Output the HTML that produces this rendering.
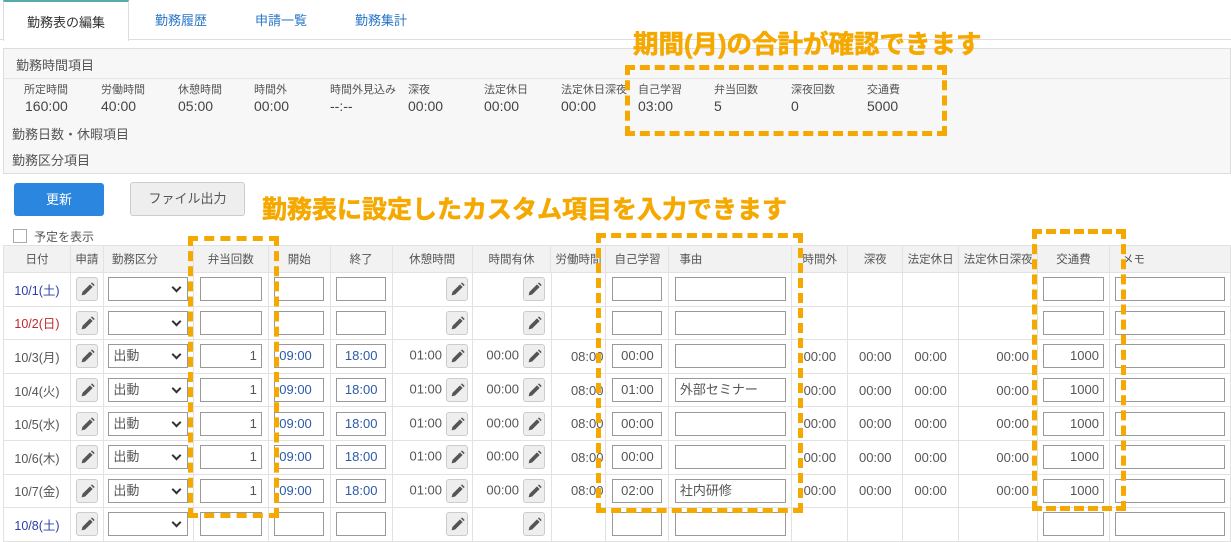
<!DOCTYPE html>
<html><head><meta charset="utf-8"><style>
*{box-sizing:border-box;margin:0;padding:0}
body{width:1231px;height:532px;overflow:hidden;background:#fff;font-family:"Liberation Sans","Noto Sans CJK JP",sans-serif;color:#444;position:relative;font-size:12px}
.abs{position:absolute}
.tab{position:absolute;top:0;height:40px;line-height:42px;font-size:13px;color:#2a78c8;text-align:center}
.panel{position:absolute;left:3px;top:48px;width:1228px;height:126px;background:#f7f7f7;border:1px solid #ddd}
.lbl{position:absolute;font-size:11px;color:#555}
.val{position:absolute;font-size:14px;color:#444}
.sec{position:absolute;font-size:13px;color:#555;left:12px}
table{position:absolute;left:3px;top:245px;border-collapse:collapse;table-layout:fixed}
td,th{border:1px solid #e2e2e2;font-weight:normal;font-size:12px;color:#555;height:33.6px;padding:0;white-space:nowrap;overflow:hidden}
th{background:#f2f2f2;height:27px;text-align:center;font-size:11.5px}
td{font-size:13px}
.d{text-align:center;font-size:12.5px}
.b{color:#2b3fa8}.r{color:#c0282c}
.in{display:block;margin:0 auto;height:24px;border:1px solid #999;background:#fff;font-size:13px;line-height:22px;padding:0 4px}
.pen{display:inline-block;width:22px;height:24px;border:1px solid #ccc;background:#eee;border-radius:3px;vertical-align:middle;position:relative}
.pen svg{position:absolute;left:3px;top:4px}
.sel{display:block;margin:0 auto;width:80px;height:24px;border:1px solid #999;background:#fff;position:relative;font-size:13px;line-height:22px;padding-left:4px}
.sel:after{content:"";position:absolute;right:7px;top:6px;width:5px;height:5px;border-right:2px solid #333;border-bottom:2px solid #333;transform:rotate(45deg)}
.tm{color:#2b5aa8}
.dash{position:absolute;border:5px dashed #f5a800}
.note{position:absolute;font-weight:bold;color:#f5a800;-webkit-text-stroke:0.6px #f5a800}
</style></head><body>
<div class="abs" style="left:0;top:39px;width:1231px;height:1px;background:#ddd"></div>
<div class="tab" style="left:3px;width:126px;background:#fff;border:1px solid #ddd;border-top:2px solid #5aa;border-bottom:none;color:#333;height:41px">勤務表の編集</div>
<div class="tab" style="left:140px;width:82px">勤務履歴</div>
<div class="tab" style="left:240px;width:82px">申請一覧</div>
<div class="tab" style="left:340px;width:82px">勤務集計</div>

<div class="panel">
<div class="sec" style="top:6px">勤務時間項目</div>
<div class="abs" style="left:0;top:29px;width:1226px;height:1px;background:#e4e4e4"></div>
</div>
<div class="lbl" style="left:24px;top:81px">所定時間</div><div class="val" style="left:25px;top:98px">160:00</div>
<div class="lbl" style="left:101px;top:81px">労働時間</div><div class="val" style="left:101px;top:98px">40:00</div>
<div class="lbl" style="left:178px;top:81px">休憩時間</div><div class="val" style="left:178px;top:98px">05:00</div>
<div class="lbl" style="left:254px;top:81px">時間外</div><div class="val" style="left:254px;top:98px">00:00</div>
<div class="lbl" style="left:330px;top:81px">時間外見込み</div><div class="val" style="left:330px;top:98px">--:--</div>
<div class="lbl" style="left:408px;top:81px">深夜</div><div class="val" style="left:408px;top:98px">00:00</div>
<div class="lbl" style="left:484px;top:81px">法定休日</div><div class="val" style="left:484px;top:98px">00:00</div>
<div class="lbl" style="left:561px;top:81px">法定休日深夜</div><div class="val" style="left:561px;top:98px">00:00</div>
<div class="lbl" style="left:638px;top:81px">自己学習</div><div class="val" style="left:638px;top:98px">03:00</div>
<div class="lbl" style="left:714px;top:81px">弁当回数</div><div class="val" style="left:714px;top:98px">5</div>
<div class="lbl" style="left:791px;top:81px">深夜回数</div><div class="val" style="left:791px;top:98px">0</div>
<div class="lbl" style="left:867px;top:81px">交通費</div><div class="val" style="left:867px;top:98px">5000</div>
<div class="sec" style="top:124px">勤務日数・休暇項目</div>
<div class="sec" style="top:150px">勤務区分項目</div>

<div class="abs" style="left:14px;top:183px;width:90px;height:33px;background:#2b86e0;border-radius:3px;color:#fff;text-align:center;line-height:33px;font-size:13px">更新</div>
<div class="abs" style="left:130px;top:182px;width:115px;height:34px;background:#eee;border:1px solid #ccc;border-radius:3px;color:#555;text-align:center;line-height:32px;font-size:13px">ファイル出力</div>
<div class="abs" style="left:13px;top:229px;width:14px;height:14px;border:1px solid #aaa;background:#fff"></div>
<div class="abs" style="left:34px;top:228px;font-size:12px;color:#555">予定を表示</div>

<table>
<colgroup><col style="width:67px"><col style="width:33px"><col style="width:90px"><col style="width:75px"><col style="width:62px"><col style="width:62px"><col style="width:80px"><col style="width:79px"><col style="width:55px"><col style="width:63px"><col style="width:123px"><col style="width:56px"><col style="width:55px"><col style="width:56px"><col style="width:79px"><col style="width:72px"><col style="width:121px"></colgroup>
<tr><th>日付</th><th>申請</th><th style="text-align:left;padding-left:8px">勤務区分</th><th>弁当回数</th><th>開始</th><th>終了</th><th>休憩時間</th><th>時間有休</th><th>労働時間</th><th>自己学習</th><th style="text-align:left;padding-left:10px">事由</th><th>時間外</th><th>深夜</th><th>法定休日</th><th>法定休日深夜</th><th>交通費</th><th style="text-align:left;padding-left:12px">メモ</th></tr>
</table>
<div id="rows"></div>

<div class="dash" style="left:188px;top:236px;width:91px;height:282px"></div>
<div class="dash" style="left:596px;top:233px;width:207px;height:280px"></div>
<div class="dash" style="left:1032px;top:229px;width:94px;height:282px"></div>
<div class="dash" style="left:625px;top:65px;width:322px;height:71px"></div>
<div class="note" style="left:633px;top:24px;font-size:25.5px">期間(月)の合計が確認できます</div>
<div class="note" style="left:262px;top:190px;font-size:25px">勤務表に設定したカスタム項目を入力できます</div>

<script>
var P='<span class="pen"><svg width="15" height="15" viewBox="0 0 14 14"><path d="M1.5 12.5 L2.3 9.2 L9.3 2.2 L11.8 4.7 L4.8 11.7 Z M10.2 1.3 L11.2 0.3 L13.7 2.8 L12.7 3.8 Z" fill="#555"/></svg></span>';
var days=[["10/1(土)","b",0],["10/2(日)","r",0],["10/3(月)","",1,"00:00",""],["10/4(火)","",1,"01:00","外部セミナー"],["10/5(水)","",1,"00:00",""],["10/6(木)","",1,"00:00",""],["10/7(金)","",1,"02:00","社内研修"],["10/8(土)","b",0]];
var h='<table style="top:272px">'+document.querySelector('colgroup').outerHTML;
days.forEach(function(d){
 var w=d[2];
 h+='<tr><td class="d '+d[1]+'">'+d[0]+'</td><td class="d">'+P+'</td><td><span class="sel">'+(w?'出動':'')+'</span></td>'+
 '<td><span class="in" style="width:62px;text-align:right">'+(w?'1':'')+'</span></td>'+
 '<td><span class="in tm" style="width:50px">'+(w?'09:00':'')+'</span></td>'+
 '<td><span class="in tm" style="width:50px;text-align:center">'+(w?'18:00':'')+'</span></td>'+
 '<td style="text-align:right;padding-right:4px">'+(w?'01:00 ':'')+P+'</td>'+
 '<td style="text-align:right;padding-right:6px">'+(w?'00:00 ':'')+P+'</td>'+
 '<td style="text-align:right;padding-right:2px">'+(w?'08:00':'')+'</td>'+
 '<td><span class="in" style="width:50px;text-align:center">'+(w?d[3]:'')+'</span></td>'+
 '<td><span class="in" style="width:111px;text-align:left">'+(w?d[4]:'')+'</span></td>'+
 '<td class="d" style="font-size:13px">'+(w?'00:00':'')+'</td><td class="d" style="font-size:13px">'+(w?'00:00':'')+'</td><td class="d" style="font-size:13px">'+(w?'00:00':'')+'</td><td style="text-align:right;padding-right:8px">'+(w?'00:00':'')+'</td>'+
 '<td><span class="in" style="width:61px;text-align:right">'+(w?'1000':'')+'</span></td>'+
 '<td><span class="in" style="width:110px"></span></td></tr>';
});
h+='</table>';
document.getElementById('rows').innerHTML=h;
</script>
</body></html>
